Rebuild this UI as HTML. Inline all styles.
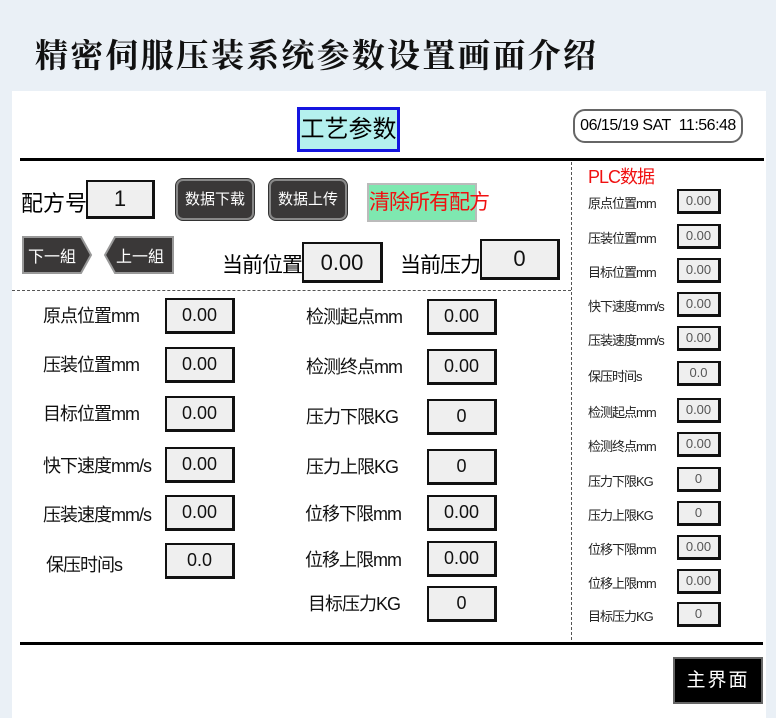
<!DOCTYPE html>
<html><head><meta charset="utf-8"><style>
body{margin:0;width:776px;height:718px;background:#eaf0f6;position:relative;overflow:hidden;font-family:"Liberation Sans","Noto Sans CJK SC",sans-serif;}
.a{position:absolute;white-space:nowrap;}
.panel{position:absolute;left:12px;top:91px;width:754px;height:627px;background:#fff;}
.box{position:absolute;background:#efefef;border:2px solid #111;border-right-width:3px;border-bottom-width:3px;box-sizing:border-box;text-align:center;color:#111;}
.lb{position:absolute;font-size:18px;color:#111;white-space:nowrap;letter-spacing:-1px;}
.rl{position:absolute;font-size:13px;color:#222;white-space:nowrap;letter-spacing:-1px;}
.btn{position:absolute;background:#3a3838;border:2px solid #888;border-radius:7px;color:#fff;font-size:15px;text-align:center;box-shadow:0 0 0 1px #333;}
</style></head><body>
<div class="a" style="left:35px;top:30px;font-family:'Noto Serif CJK SC',serif;font-weight:bold;font-size:33px;color:#111;letter-spacing:2.2px;">精密伺服压装系统参数设置画面介绍</div>
<div class="panel"></div>
<div class="a" style="left:297px;top:107px;width:103px;height:45px;box-sizing:border-box;border:3px solid #1515e0;background:#b4f0ee;font-size:24px;text-align:center;line-height:39px;">工艺参数</div>
<div class="a" style="left:573px;top:109px;width:170px;height:34px;box-sizing:border-box;border:2px solid #666;border-radius:12px;background:#fff;font-size:16px;text-align:center;line-height:30px;letter-spacing:-0.5px;">06/15/19 SAT&nbsp; 11:56:48</div>
<div class="a" style="left:20px;top:158px;width:744px;height:3px;background:#000;"></div>
<div class="a" style="left:20px;top:642px;width:743px;height:3px;background:#000;"></div>
<div class="a" style="left:12px;top:290px;width:559px;border-top:1px dashed #555;"></div>
<div class="a" style="left:571px;top:162px;height:478px;border-left:1px dashed #555;"></div>

<div class="a" style="left:21px;top:186px;font-size:22px;">配方号 :</div>
<div class="box" style="left:86px;top:180px;width:69px;height:39px;font-size:22px;line-height:34px;">1</div>
<div class="btn" style="left:176px;top:179px;width:74px;height:37px;line-height:37px;">数据下载</div>
<div class="btn" style="left:269px;top:179px;width:74px;height:37px;line-height:37px;">数据上传</div>
<div class="a" style="left:367px;top:183px;width:110px;height:39px;box-sizing:border-box;border:2px solid #bbb;background:#7ee8b0;color:#f01010;font-size:21px;text-align:center;line-height:35px;letter-spacing:-1px;">清除所有配方</div>
<svg class="a" style="left:21px;top:233px" width="156" height="44">
<polygon points="2,4 60,4 70,22 60,40 2,40" fill="#3a3838" stroke="#999" stroke-width="2"/>
<polygon points="94,4 152,4 152,40 94,40 84,22" fill="#3a3838" stroke="#999" stroke-width="2"/>
</svg>
<div class="a" style="left:28px;top:243px;font-size:16px;color:#fff;">下一組</div>
<div class="a" style="left:116px;top:243px;font-size:16px;color:#fff;">上一組</div>
<div class="a" style="left:222px;top:249px;font-size:21px;letter-spacing:-1px;">当前位置</div>
<div class="box" style="left:302px;top:242px;width:81px;height:41px;font-size:22px;line-height:38px;">0.00</div>
<div class="a" style="left:400px;top:249px;font-size:21px;letter-spacing:-1px;">当前压力</div>
<div class="box" style="left:480px;top:239px;width:80px;height:41px;font-size:22px;line-height:36px;">0</div>

<div class="lb" style="left:43px;top:302px;">原点位置mm</div>
<div class="lb" style="left:43px;top:351px;">压装位置mm</div>
<div class="lb" style="left:43px;top:400px;">目标位置mm</div>
<div class="lb" style="left:43px;top:452px;">快下速度mm/s</div>
<div class="lb" style="left:43px;top:501px;">压装速度mm/s</div>
<div class="lb" style="left:46px;top:551px;">保压时间s</div>
<div class="box" style="left:165px;top:298px;width:70px;height:36px;font-size:18px;line-height:31px;">0.00</div>
<div class="box" style="left:165px;top:347px;width:70px;height:36px;font-size:18px;line-height:31px;">0.00</div>
<div class="box" style="left:165px;top:396px;width:70px;height:36px;font-size:18px;line-height:31px;">0.00</div>
<div class="box" style="left:165px;top:447px;width:70px;height:36px;font-size:18px;line-height:31px;">0.00</div>
<div class="box" style="left:165px;top:495px;width:70px;height:36px;font-size:18px;line-height:31px;">0.00</div>
<div class="box" style="left:165px;top:543px;width:70px;height:36px;font-size:18px;line-height:31px;">0.0</div>

<div class="lb" style="left:306px;top:303px;">检测起点mm</div>
<div class="lb" style="left:306px;top:353px;">检测终点mm</div>
<div class="lb" style="left:306px;top:403px;">压力下限KG</div>
<div class="lb" style="left:306px;top:453px;">压力上限KG</div>
<div class="lb" style="left:305px;top:500px;">位移下限mm</div>
<div class="lb" style="left:305px;top:546px;">位移上限mm</div>
<div class="lb" style="left:308px;top:590px;">目标压力KG</div>
<div class="box" style="left:427px;top:299px;width:70px;height:36px;font-size:18px;line-height:31px;">0.00</div>
<div class="box" style="left:427px;top:349px;width:70px;height:36px;font-size:18px;line-height:31px;">0.00</div>
<div class="box" style="left:427px;top:399px;width:70px;height:36px;font-size:18px;line-height:31px;">0</div>
<div class="box" style="left:427px;top:449px;width:70px;height:36px;font-size:18px;line-height:31px;">0</div>
<div class="box" style="left:427px;top:495px;width:70px;height:36px;font-size:18px;line-height:31px;">0.00</div>
<div class="box" style="left:427px;top:541px;width:70px;height:36px;font-size:18px;line-height:31px;">0.00</div>
<div class="box" style="left:427px;top:586px;width:70px;height:36px;font-size:18px;line-height:31px;">0</div>

<div class="a" style="left:588px;top:163px;font-size:18px;color:#f01010;letter-spacing:-1px;">PLC数据</div>
<div class="rl" style="left:588px;top:193px;">原点位置mm</div>
<div class="rl" style="left:588px;top:228px;">压装位置mm</div>
<div class="rl" style="left:588px;top:262px;">目标位置mm</div>
<div class="rl" style="left:588px;top:296px;">快下速度mm/s</div>
<div class="rl" style="left:588px;top:330px;">压装速度mm/s</div>
<div class="rl" style="left:588px;top:366px;">保压时间s</div>
<div class="rl" style="left:588px;top:402px;">检测起点mm</div>
<div class="rl" style="left:588px;top:436px;">检测终点mm</div>
<div class="rl" style="left:588px;top:471px;">压力下限KG</div>
<div class="rl" style="left:588px;top:505px;">压力上限KG</div>
<div class="rl" style="left:588px;top:539px;">位移下限mm</div>
<div class="rl" style="left:588px;top:573px;">位移上限mm</div>
<div class="rl" style="left:588px;top:606px;">目标压力KG</div>
<div class="box" style="left:677px;top:189px;width:44px;height:25px;font-size:13px;line-height:20px;color:#555;">0.00</div>
<div class="box" style="left:677px;top:224px;width:44px;height:25px;font-size:13px;line-height:20px;color:#555;">0.00</div>
<div class="box" style="left:677px;top:258px;width:44px;height:25px;font-size:13px;line-height:20px;color:#555;">0.00</div>
<div class="box" style="left:677px;top:292px;width:44px;height:25px;font-size:13px;line-height:20px;color:#555;">0.00</div>
<div class="box" style="left:677px;top:326px;width:44px;height:25px;font-size:13px;line-height:20px;color:#555;">0.00</div>
<div class="box" style="left:677px;top:361px;width:44px;height:25px;font-size:13px;line-height:20px;color:#555;">0.0</div>
<div class="box" style="left:677px;top:398px;width:44px;height:25px;font-size:13px;line-height:20px;color:#555;">0.00</div>
<div class="box" style="left:677px;top:432px;width:44px;height:25px;font-size:13px;line-height:20px;color:#555;">0.00</div>
<div class="box" style="left:677px;top:467px;width:44px;height:25px;font-size:13px;line-height:20px;color:#555;">0</div>
<div class="box" style="left:677px;top:501px;width:44px;height:25px;font-size:13px;line-height:20px;color:#555;">0</div>
<div class="box" style="left:677px;top:535px;width:44px;height:25px;font-size:13px;line-height:20px;color:#555;">0.00</div>
<div class="box" style="left:677px;top:569px;width:44px;height:25px;font-size:13px;line-height:20px;color:#555;">0.00</div>
<div class="box" style="left:677px;top:602px;width:44px;height:25px;font-size:13px;line-height:20px;color:#555;">0</div>

<div class="a" style="left:673px;top:657px;width:90px;height:47px;box-sizing:border-box;background:#000;border:2px solid #666;color:#fff;font-size:19px;text-align:center;line-height:43px;letter-spacing:2px;">主界面</div>
</body></html>
